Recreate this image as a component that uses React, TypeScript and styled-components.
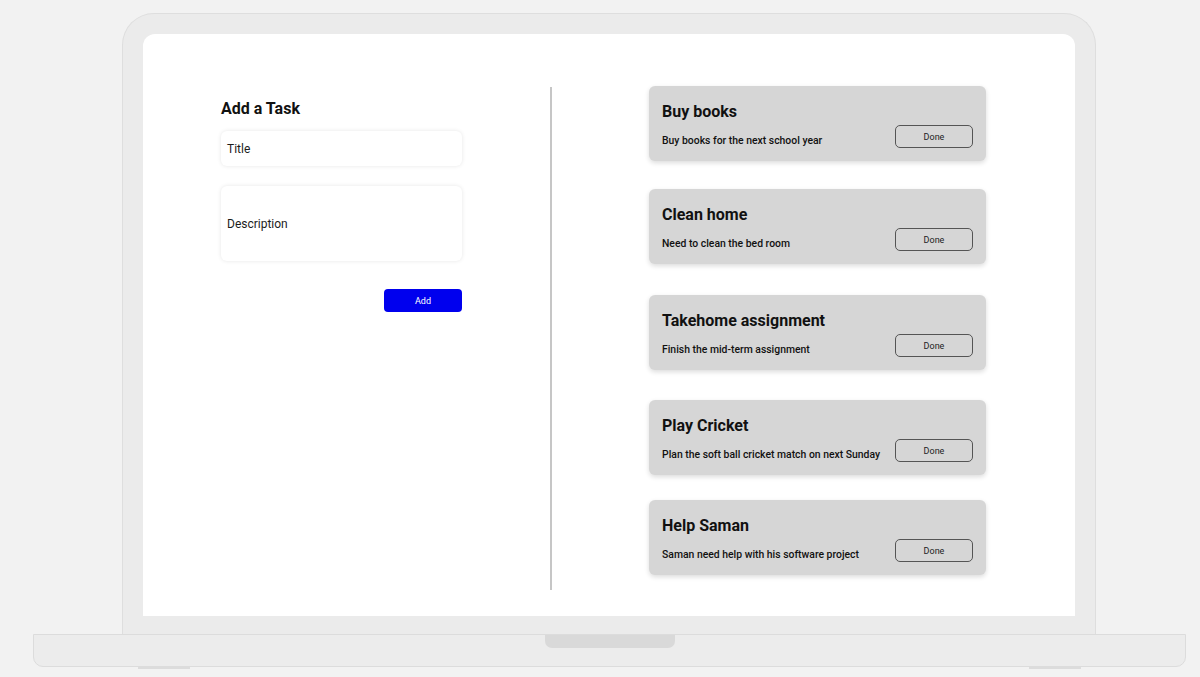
import React from 'react';
import styled, { createGlobalStyle } from 'styled-components';

const GlobalStyle = createGlobalStyle`
  html, body {
    margin: 0;
    padding: 0;
    background: #f2f2f2;
    font-family: Roboto, 'Liberation Sans', sans-serif;
    color: #111;
  }
`;

const Page = styled.div`
  width: 1200px;
  height: 677px;
  box-sizing: border-box;
  padding: 13px 0 0 18px;
  display: flex;
  flex-direction: column;
  align-items: center;
  overflow: hidden;
`;

const Lid = styled.div`
  width: 974px;
  height: 621px;
  box-sizing: border-box;
  padding: 20px 20px 18px;
  background: #ebebeb;
  border: 1px solid #dedede;
  border-bottom: none;
  border-radius: 32px 32px 0 0;
`;

const Screen = styled.div`
  height: 100%;
  background: #fff;
  border-radius: 12px 12px 0 0;
  display: flex;
  align-items: flex-start;
`;

const FormPanel = styled.section`
  width: 407px;
  box-sizing: border-box;
  padding: 65px 0 0 78px;
`;

const Heading = styled.h2`
  margin: 0 0 12px;
  font-size: 16px;
  font-weight: 700;
  line-height: 20px;
`;

const Field = styled.div<{ $tall?: boolean }>`
  width: 241px;
  height: ${(p) => (p.$tall ? '75px' : '35px')};
  box-sizing: border-box;
  margin-bottom: ${(p) => (p.$tall ? '28px' : '20px')};
  padding-left: 6px;
  display: flex;
  align-items: center;
  background: #fff;
  border-radius: 6px;
  box-shadow: 0 0 4px rgba(0, 0, 0, 0.1);
  font-size: 12px;
  color: #1c1c1c;
`;

const Actions = styled.div`
  width: 241px;
  display: flex;
  justify-content: flex-end;
`;

const AddButton = styled.button`
  width: 78px;
  height: 23px;
  border: none;
  border-radius: 4px;
  background: #0000ee;
  color: #fff;
  font-family: inherit;
  font-size: 9px;
  cursor: pointer;
`;

const Divider = styled.div`
  width: 2px;
  height: 503px;
  margin-top: 53px;
  background: #c6c6c6;
`;

const TaskList = styled.section`
  padding: 52px 0 0 97px;
  display: flex;
  flex-direction: column;
`;

const Card = styled.article<{ $gap: number }>`
  width: 337px;
  height: 75px;
  box-sizing: border-box;
  margin-top: ${(p) => p.$gap}px;
  padding: 15px 13px 0 13px;
  background: #d6d6d6;
  border-radius: 6px;
  box-shadow: 0 2px 5px rgba(0, 0, 0, 0.14);
`;

const CardTitle = styled.h3`
  margin: 0 0 2px;
  font-size: 16px;
  font-weight: 700;
  line-height: 22px;
`;

const CardRow = styled.div`
  display: flex;
  align-items: flex-start;
  justify-content: space-between;
`;

const CardText = styled.p`
  margin: 10px 0 0;
  font-size: 10.4px;
  line-height: 12px;
  font-weight: 500;
  color: #111;
`;

const DoneButton = styled.button`
  width: 78px;
  height: 23px;
  box-sizing: border-box;
  border: 1px solid #555;
  border-radius: 5px;
  background: transparent;
  color: #222;
  font-family: inherit;
  font-size: 9px;
  cursor: pointer;
`;

const Base = styled.div`
  position: relative;
  width: 1153px;
  height: 33px;
  box-sizing: border-box;
  background: #ececec;
  border: 1px solid #dcdcdc;
  border-radius: 0 0 10px 10px;
`;

const Notch = styled.div`
  position: absolute;
  top: 0;
  left: 511px;
  width: 130px;
  height: 13px;
  background: #d9d9d9;
  border-radius: 0 0 7px 7px;
`;

const Feet = styled.div`
  width: 943px;
  display: flex;
  justify-content: space-between;
`;

const Foot = styled.div`
  width: 52px;
  height: 2px;
  background: #dcdcdc;
`;

const tasks = [
  { title: 'Buy books', text: 'Buy books for the next school year', gap: 0 },
  { title: 'Clean home', text: 'Need to clean the bed room', gap: 28 },
  { title: 'Takehome assignment', text: 'Finish the mid-term assignment', gap: 31 },
  { title: 'Play Cricket', text: 'Plan the soft ball cricket match on next Sunday', gap: 30 },
  { title: 'Help Saman', text: 'Saman need help with his software project', gap: 25 },
];

const App: React.FC = () => {
  return (
    <Page>
      <GlobalStyle />
      <Lid>
        <Screen>
          <FormPanel>
            <Heading>Add a Task</Heading>
            <Field>Title</Field>
            <Field $tall>Description</Field>
            <Actions>
              <AddButton>Add</AddButton>
            </Actions>
          </FormPanel>
          <Divider />
          <TaskList>
            {tasks.map((t) => (
              <Card key={t.title} $gap={t.gap}>
                <CardTitle>{t.title}</CardTitle>
                <CardRow>
                  <CardText>{t.text}</CardText>
                  <DoneButton>Done</DoneButton>
                </CardRow>
              </Card>
            ))}
          </TaskList>
        </Screen>
      </Lid>
      <Base>
        <Notch />
      </Base>
      <Feet>
        <Foot />
        <Foot />
      </Feet>
    </Page>
  );
};

export default App;
